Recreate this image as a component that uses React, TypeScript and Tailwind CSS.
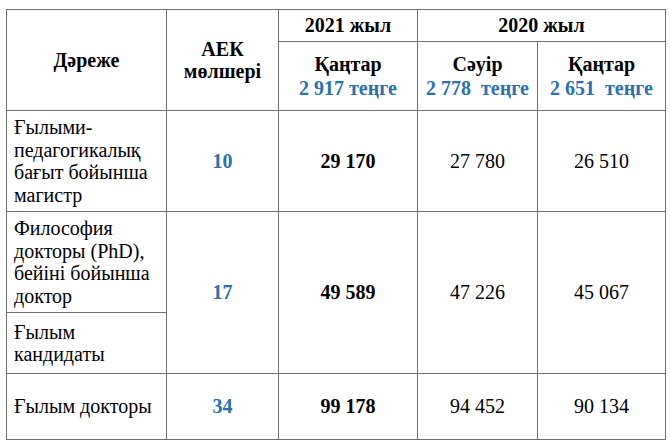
const cell = "border border-[#707070] align-middle";
const blue = "text-[#2c70ad]";

export default function App() {
  return (
    <div className="min-h-screen bg-white pl-[6px] pt-[9px] font-['Liberation_Serif','Times_New_Roman',serif] text-black">
      <table className="w-[659px] table-fixed border-collapse text-[20px] leading-[22.5px]">
        <colgroup>
          <col className="w-[160px]" />
          <col className="w-[112px]" />
          <col className="w-[139px]" />
          <col className="w-[120px]" />
          <col className="w-[128px]" />
        </colgroup>
        <thead className="text-[20px] font-bold">
          <tr className="h-[32px]">
            <th rowSpan={2} className={`${cell} text-center`}>Дәреже</th>
            <th rowSpan={2} className={`${cell} text-center leading-[22px]`}>
              АЕК
              <br />
              мөлшері
            </th>
            <th className={`${cell} text-center`}>2021 жыл</th>
            <th colSpan={2} className={`${cell} text-center`}>2020 жыл</th>
          </tr>
          <tr className="h-[69px]">
            <th className={`${cell} text-center leading-[24px]`}>
              Қаңтар
              <br />
              <span className={blue}>2 917 теңге</span>
            </th>
            <th className={`${cell} text-center leading-[24px]`}>
              Сәуір
              <br />
              <span className={`${blue} whitespace-pre`}>2 778  теңге</span>
            </th>
            <th className={`${cell} text-center leading-[24px]`}>
              Қаңтар
              <br />
              <span className={`${blue} whitespace-pre`}>2 651  теңге</span>
            </th>
          </tr>
        </thead>
        <tbody>
          <tr className="h-[101px]">
            <td className={`${cell} px-[7px]`}>Ғылыми-педагогикалық бағыт бойынша магистр</td>
            <td className={`${cell} text-center font-bold ${blue}`}>10</td>
            <td className={`${cell} text-center font-bold`}>29 170</td>
            <td className={`${cell} text-center`}>27 780</td>
            <td className={`${cell} text-center`}>26 510</td>
          </tr>
          <tr className="h-[101px]">
            <td className={`${cell} px-[7px]`}>Философия докторы (PhD), бейіні бойынша доктор</td>
            <td rowSpan={2} className={`${cell} text-center font-bold ${blue}`}>17</td>
            <td rowSpan={2} className={`${cell} text-center font-bold`}>49 589</td>
            <td rowSpan={2} className={`${cell} text-center`}>47 226</td>
            <td rowSpan={2} className={`${cell} text-center`}>45 067</td>
          </tr>
          <tr className="h-[61px]">
            <td className={`${cell} px-[7px]`}>
              Ғылым
              <br />
              кандидаты
            </td>
          </tr>
          <tr className="h-[66px]">
            <td className={`${cell} px-[7px]`}>Ғылым докторы</td>
            <td className={`${cell} text-center font-bold ${blue}`}>34</td>
            <td className={`${cell} text-center font-bold`}>99 178</td>
            <td className={`${cell} text-center`}>94 452</td>
            <td className={`${cell} text-center`}>90 134</td>
          </tr>
        </tbody>
      </table>
    </div>
  );
}
